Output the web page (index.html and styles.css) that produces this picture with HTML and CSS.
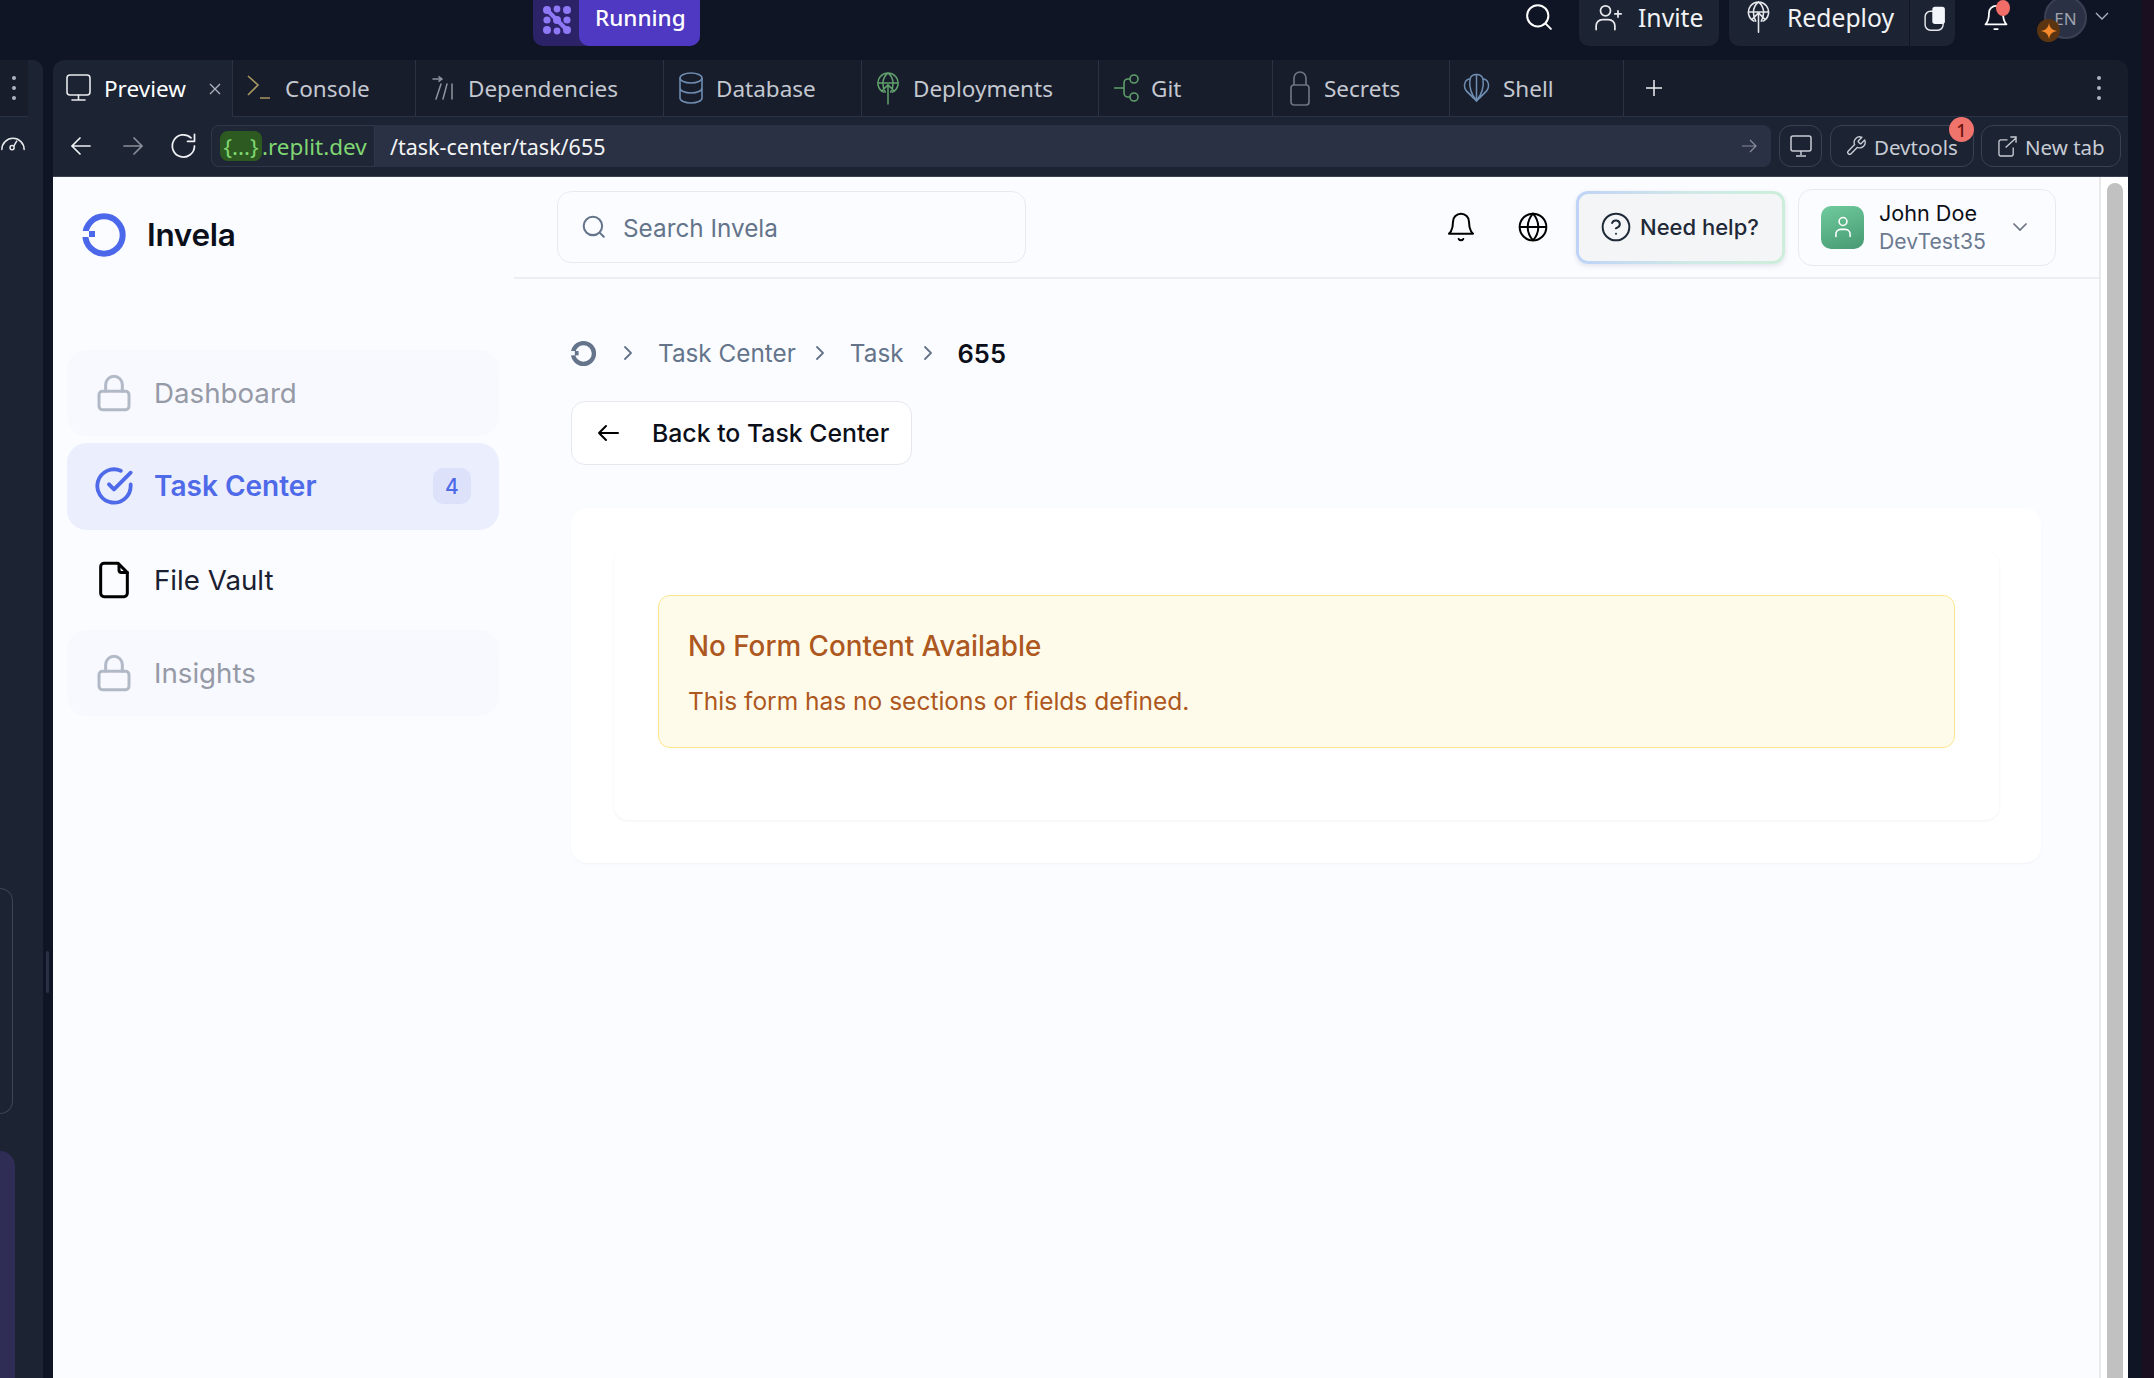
FILE: index.html
```html
<!DOCTYPE html>
<html lang="en">
<head>
<meta charset="utf-8">
<title>Invela</title>
<link rel="stylesheet" href="styles.css">
</head>
<body>
<div class="screen">
  <div class="desk">
    <header class="topbar">
      <div class="run">
        <span class="run-icon">
          <svg width="30" height="30" viewBox="0 0 30 30" fill="#8f78f5"><circle cx="5" cy="5" r="4"/><circle cx="15" cy="4" r="3.4"/><circle cx="25" cy="5" r="4"/><circle cx="5" cy="15" r="3.6"/><circle cx="15" cy="15" r="4"/><circle cx="25" cy="15" r="3.6"/><circle cx="5" cy="25" r="4"/><circle cx="15" cy="26" r="3.4"/><circle cx="25" cy="25" r="4"/><path d="M5 5 25 25" stroke="#8f78f5" stroke-width="4"/></svg>
        </span>
        <span class="run-label">Running</span>
      </div>
      <div class="top-right">
        <svg class="top-search" width="30" height="30" viewBox="0 0 24 24" fill="none" stroke="#fff" stroke-width="1.6" stroke-linecap="round"><circle cx="11" cy="11" r="8.5"/><path d="m17.5 17.5 4 4"/></svg>
        <div class="top-btn invite">
          <svg width="30" height="30" viewBox="0 0 24 24" fill="none" stroke="#e6e8ec" stroke-width="1.4" stroke-linecap="round"><circle cx="10" cy="7" r="4"/><path d="M2.5 22v-3a5 5 0 0 1 5-5h5a5 5 0 0 1 5 5v3M20 7v5M17.5 9.500h5"/></svg>
          <span>Invite</span>
        </div>
        <div class="top-btn redeploy">
          <span class="redeploy-main">
            <svg width="23" height="33" viewBox="0 0 24 36" fill="none" stroke="#e6e8ec" stroke-width="1.7" stroke-linecap="round" stroke-linejoin="round"><path d="M7 22A11 11 0 1 1 17 22M1 12h22M12 1c-8 7-6 15-3 21M12 1c8 7 6 15 3 21M12 14v20M5 20l7-7 7 7"/></svg>
            <span>Redeploy</span>
          </span>
          <span class="redeploy-copy">
            <svg width="24" height="27" viewBox="0 0 26 30" fill="none" stroke="#e6e8ec" stroke-width="1.6"><rect x="2" y="7" width="20" height="21" rx="6"/><rect x="10" y="2" width="14" height="19" rx="3" fill="#f3f6fb" stroke="none"/></svg>
          </span>
        </div>
        <div class="top-bell">
          <svg width="28" height="32" viewBox="0 0 24 27" fill="none" stroke="#fff" stroke-width="1.5" stroke-linecap="round" stroke-linejoin="round"><path d="M6 9a6 6 0 0 1 12 0c0 7 3 10 3 10H3s3-3 3-10M10.500 23h3"/></svg>
          <i class="red-dot"></i>
        </div>
        <div class="lang">
          <span>EN</span>
          <i class="star">
            <svg width="16" height="16" viewBox="0 0 16 16" fill="#f5892b"><path d="M8 0c.7 4.500 2.800 6.800 8 8-5.200 1.200-7.300 3.500-8 8-.7-4.500-2.800-6.800-8-8 5.200-1.200 7.300-3.500 8-8z"/></svg>
          </i>
        </div>
        <svg class="lang-chev" width="16" height="10" viewBox="0 0 16 10" fill="none" stroke="#aab0bc" stroke-width="1.4"><path d="m2 2 6 6 6-6"/></svg>
      </div>
    </header>

    <div class="workspace">
      <aside class="rail">
        <div class="rail-dots"><i></i><i></i><i></i></div>
        <div class="rail-gauge">
          <svg width="26" height="20" viewBox="0 0 28 20" fill="none" stroke="#e6e8ec" stroke-width="1.6" stroke-linecap="round"><path d="M2 17a12 12 0 1 1 24 0"/><circle cx="13" cy="15" r="2.200"/><path d="m15 13 3-5"/></svg>
        </div>
        <div class="rail-box"></div>
        <div class="rail-purple"></div>
      </aside>
      <div class="splitter"><i></i></div>

      <main class="panel">
        <nav class="tabs">
          <div class="tab active t-preview">
            <svg width="25" height="30" viewBox="0 0 25 30" fill="none" stroke="#e8eaee" stroke-width="1.600" stroke-linecap="round"><rect x="1" y="2" width="23" height="20" rx="3"/><path d="M12.500 22v5M6 27h13"/></svg>
            <span>Preview</span>
            <svg class="tab-x" width="14" height="14" viewBox="0 0 14 14" stroke="#aeb3bd" stroke-width="1.300"><path d="m2 2 10 10M12 2 2 12"/></svg>
          </div>
          <div class="tab t-console">
            <svg width="24" height="30" viewBox="0 0 24 30" fill="none" stroke-width="1.600"><path d="m1 3 10 9-10 10" stroke="#a8975f"/><path d="M13 25h10" stroke="#a8975f"/></svg>
            <span>Console</span>
          </div>
          <div class="tab t-deps">
            <svg width="22" height="24" viewBox="0 0 22 24" fill="none" stroke="#8f949e" stroke-width="1.500" stroke-linecap="round"><path d="M1 3h9M7 .8 10 3 7 5.200M9 8 4 23M15 8l-4 15M20 8v15"/></svg>
            <span>Dependencies</span>
          </div>
          <div class="tab t-db">
            <svg width="24" height="32" viewBox="0 0 24 32" fill="none" stroke="#6f8db0" stroke-width="1.600"><ellipse cx="12" cy="6" rx="11" ry="5"/><path d="M1 6v20c0 2.800 4.900 5 11 5s11-2.200 11-5V6M1 16c0 2.800 4.900 5 11 5s11-2.200 11-5"/></svg>
            <span>Database</span>
          </div>
          <div class="tab t-deploy">
            <svg width="22" height="33" viewBox="0 0 24 36" fill="none" stroke="#5f9e6a" stroke-width="1.700" stroke-linecap="round" stroke-linejoin="round"><path d="M7 22A11 11 0 1 1 17 22M1 12h22M12 1c-8 7-6 15-3 21M12 1c8 7 6 15 3 21M12 14v21M5 21l7-7 7 7"/></svg>
            <span>Deployments</span>
          </div>
          <div class="tab t-git">
            <svg width="26" height="30" viewBox="0 0 26 30" fill="none" stroke="#5f9e6a" stroke-width="1.600"><circle cx="21" cy="6" r="4"/><circle cx="21" cy="24" r="4"/><path d="M17 6h-2a4 4 0 0 0-4 4v10a4 4 0 0 0 4 4h2M1 15h10"/></svg>
            <span>Git</span>
          </div>
          <div class="tab t-secrets">
            <svg width="20" height="36" viewBox="0 0 20 36" fill="none" stroke="#6e7380" stroke-width="1.700"><rect x="1" y="15" width="18" height="20" rx="3"/><path d="M4 15V8a6 6 0 0 1 12 0v7"/></svg>
            <span>Secrets</span>
          </div>
          <div class="tab t-shell">
            <svg width="27" height="30" viewBox="0 0 27 30" fill="none" stroke="#6f8db0" stroke-width="1.500" stroke-linejoin="round" stroke-linecap="round"><path d="M13.500 28 10.500 25 3.500 18C-.5 13 2 6 7 6 8 2.500 11 1.500 13.500 1.500S19 2.500 20 6c5 0 7.500 7 3.500 12l-7 7z"/><path d="M13.500 1.500V28M7 6c-1 7 1 15 6.500 22M20 6c1 7-1 15-6.500 22M3.500 18l7 7M23.500 18l-7 7"/></svg>
            <span>Shell</span>
          </div>
          <div class="tab-plus">
            <svg width="16" height="16" viewBox="0 0 16 16" stroke="#f0f1f3" stroke-width="1.500"><path d="M8 0v16M0 8h16"/></svg>
          </div>
          <div class="tab-dots"><i></i><i></i><i></i></div>
        </nav>

        <div class="address">
          <svg class="nav-ic first" width="24" height="24" viewBox="0 0 24 24" fill="none" stroke="#eef0f3" stroke-width="1.700" stroke-linecap="round"><path d="M21 12H3M11 4l-8 8 8 8"/></svg>
          <svg class="nav-ic second" width="24" height="24" viewBox="0 0 24 24" fill="none" stroke="#8a8f9a" stroke-width="1.700" stroke-linecap="round"><path d="M3 12h18M13 4l8 8-8 8"/></svg>
          <svg class="nav-ic third" width="28" height="28" viewBox="0 0 24 24" fill="none" stroke="#eef0f3" stroke-width="1.500" stroke-linecap="round" stroke-linejoin="round"><path d="M21 12a9.500 9.500 0 1 1-3-7M21 2v6h-6"/></svg>
          <div class="url">
            <div class="domain"><span class="chip">{...}</span><span>.replit.dev</span></div>
            <span class="path">/task-center/task/655</span>
            <svg class="go" width="16" height="16" viewBox="0 0 16 16" fill="none" stroke="#888e9b" stroke-width="1.200"><path d="M1 8h14M9 2l6 6-6 6"/></svg>
          </div>
          <div class="addr-btn monitor">
            <svg width="22" height="24" viewBox="0 0 22 24" fill="none" stroke="#c8ccd4" stroke-width="1.500"><rect x="1" y="2" width="20" height="15" rx="2"/><path d="M11 17v4M6 22h10"/></svg>
          </div>
          <div class="addr-btn devtools">
            <svg width="22" height="24" viewBox="0 0 24 24" fill="none" stroke="#c8ccd4" stroke-width="1.500" stroke-linecap="round" stroke-linejoin="round"><path d="M14.700 6.300a1 1 0 0 0 0 1.400l1.600 1.600a1 1 0 0 0 1.400 0l3.770-3.770a6 6 0 0 1-7.940 7.940l-6.910 6.910a2.120 2.120 0 0 1-3-3l6.910-6.910a6 6 0 0 1 7.940-7.940z"/></svg>
            <span>Devtools</span>
            <b class="count">1</b>
          </div>
          <div class="addr-btn newtab">
            <svg width="19" height="21" viewBox="0 0 20 22" fill="none" stroke="#c8ccd4" stroke-width="1.400"><path d="M10 4H3a2 2 0 0 0-2 2v13a2 2 0 0 0 2 2h11a2 2 0 0 0 2-2v-7M8 12 19 2M13 1h6v6"/></svg>
            <span>New tab</span>
          </div>
        </div>

        <div class="app">
          <div class="page">
            <aside class="sidebar">
              <div class="brand">
                <svg width="44" height="44" viewBox="0 0 44 44"><circle cx="22" cy="22" r="18.700" fill="none" stroke="#4c68ea" stroke-width="6"/><rect x="0" y="18" width="7" height="6" fill="#fbfcff"/><rect x="7" y="18" width="6" height="6" fill="#4c68ea"/></svg>
                <span>Invela</span>
              </div>
              <ul class="nav">
                <li class="nav-item locked">
                  <svg width="40" height="40" viewBox="0 0 24 24" fill="none" stroke="#b2b9c6" stroke-width="1.800" stroke-linecap="round" stroke-linejoin="round"><rect x="3" y="11" width="18" height="11" rx="2"/><path d="M7 11V7a5 5 0 0 1 10 0v4"/></svg>
                  <span>Dashboard</span>
                </li>
                <li class="nav-item current">
                  <svg width="40" height="40" viewBox="0 0 24 24" fill="none" stroke="#4f6ae8" stroke-width="2.300" stroke-linecap="round" stroke-linejoin="round"><path d="M22 11.080V12a10 10 0 1 1-5.930-9.140"/><path d="m22 4-10 10.010-3-3"/></svg>
                  <span>Task Center</span>
                  <em class="badge">4</em>
                </li>
                <li class="nav-item">
                  <svg width="40" height="40" viewBox="0 0 24 24" fill="none" stroke="#000" stroke-width="1.800" stroke-linecap="round" stroke-linejoin="round"><path d="M14.500 2H6a2 2 0 0 0-2 2v16a2 2 0 0 0 2 2h12a2 2 0 0 0 2-2V7.500z"/><path d="M15 3v3a1.500 1.500 0 0 0 1.500 1.500H20"/></svg>
                  <span>File Vault</span>
                </li>
                <li class="nav-item locked">
                  <svg width="40" height="40" viewBox="0 0 24 24" fill="none" stroke="#b2b9c6" stroke-width="1.800" stroke-linecap="round" stroke-linejoin="round"><rect x="3" y="11" width="18" height="11" rx="2"/><path d="M7 11V7a5 5 0 0 1 10 0v4"/></svg>
                  <span>Insights</span>
                </li>
              </ul>
            </aside>

            <div class="main">
              <div class="header">
                <div class="search">
                  <svg width="26" height="26" viewBox="0 0 24 24" fill="none" stroke="#64748b" stroke-width="1.900" stroke-linecap="round"><circle cx="11" cy="11" r="8.500"/><path d="m21 21-3.800-3.800"/></svg>
                  <span>Search Invela</span>
                </div>
                <div class="icon-btn bell">
                  <svg width="32" height="32" viewBox="0 0 24 24" fill="none" stroke="#000" stroke-width="1.500" stroke-linecap="round" stroke-linejoin="round"><path d="M6 8a6 6 0 0 1 12 0c0 7 3 9 3 9H3s3-2 3-9"/><path d="M10.300 21a1.940 1.940 0 0 0 3.400 0"/></svg>
                </div>
                <div class="icon-btn globe">
                  <svg width="32" height="32" viewBox="0 0 24 24" fill="none" stroke="#000" stroke-width="1.500"><circle cx="12" cy="12" r="10"/><path d="M2 12h20M12 2a15.300 15.300 0 0 1 4 10 15.300 15.300 0 0 1-4 10 15.300 15.300 0 0 1-4-10 15.300 15.300 0 0 1 4-10z"/></svg>
                </div>
                <div class="help">
                  <div class="help-in">
                    <svg width="32" height="32" viewBox="0 0 24 24" fill="none" stroke="#1f2937" stroke-width="1.500" stroke-linecap="round"><circle cx="12" cy="12" r="10"/><path d="M9.100 9a3 3 0 0 1 5.800 1c0 2-3 3-3 3M12 17h.01"/></svg>
                    <span>Need help?</span>
                  </div>
                </div>
                <div class="user">
                  <span class="avatar">
                    <svg width="28" height="30" viewBox="0 0 28 30" fill="none" stroke="#fff" stroke-width="2" stroke-linecap="round"><circle cx="14" cy="8" r="5"/><path d="M5 27v-3a6 6 0 0 1 6-6h6a6 6 0 0 1 6 6v3"/></svg>
                  </span>
                  <span class="who"><b>John Doe</b><small>DevTest35</small></span>
                  <svg class="user-chev" width="16" height="10" viewBox="0 0 16 10" fill="none" stroke="#6b7280" stroke-width="1.700" stroke-linecap="round"><path d="m2 2 6 6 6-6"/></svg>
                </div>
              </div>

              <div class="content">
                <div class="crumbs">
                  <svg class="crumb-home" width="27" height="27" viewBox="0 0 44 44"><circle cx="22" cy="22" r="17" fill="none" stroke="#64748b" stroke-width="7"/><rect x="0" y="18" width="8" height="7" fill="#fbfcff"/><rect x="8" y="18" width="6" height="7" fill="#64748b"/></svg>
                  <svg class="chev" width="12" height="16" viewBox="0 0 12 16" fill="none" stroke="#64748b" stroke-width="1.800" stroke-linecap="round" stroke-linejoin="round"><path d="m3 2 6 6-6 6"/></svg>
                  <span>Task Center</span>
                  <svg class="chev" width="12" height="16" viewBox="0 0 12 16" fill="none" stroke="#64748b" stroke-width="1.800" stroke-linecap="round" stroke-linejoin="round"><path d="m3 2 6 6-6 6"/></svg>
                  <span>Task</span>
                  <svg class="chev" width="12" height="16" viewBox="0 0 12 16" fill="none" stroke="#64748b" stroke-width="1.800" stroke-linecap="round" stroke-linejoin="round"><path d="m3 2 6 6-6 6"/></svg>
                  <strong>655</strong>
                </div>
                <div class="back">
                  <svg width="24" height="24" viewBox="0 0 24 24" fill="none" stroke="#000" stroke-width="2" stroke-linecap="round" stroke-linejoin="round"><path d="M22 12H3M10 5l-7 7 7 7"/></svg>
                  <span>Back to Task Center</span>
                </div>
                <section class="card">
                  <div class="inner">
                    <div class="alert">
                      <h2>No Form Content Available</h2>
                      <p>This form has no sections or fields defined.</p>
                    </div>
                  </div>
                </section>
              </div>
            </div>
          </div>
          <div class="scroll"><i></i></div>
        </div>
      </main>
    </div>
  </div>
  <div class="edge"></div>
</div>
</body>
</html>
```
FILE: styles.css
```css
* { box-sizing: border-box; }
html, body { margin: 0; height: 100%; }
body { overflow: hidden; background: #0f1524; font-family: "Noto Sans", sans-serif; }
svg { display: block; flex: none; }
i, em { font-style: normal; display: block; }
ul { list-style: none; margin: 0; padding: 0; }

.screen { display: flex; width: 2154px; height: 1378px; }
.desk { width: 2142px; display: flex; flex-direction: column; }
.edge { width: 12px; background: #1a0f20; }

/* top bar */
.topbar { height: 60px; display: flex; align-items: flex-start; flex: none; }
.run { margin-left: 533px; height: 46px; width: 167px; display: flex; background: #2b2268; border-radius: 0 0 10px 10px; }
.run-icon { width: 46px; display: flex; align-items: center; justify-content: center; padding: 0 0 6px 2px; }
.run-label { flex: 1; background: #4f38c2; border-radius: 0 0 10px 10px; color: #fff; font-size: 22.5px; font-weight: 500; padding-left: 16px; line-height: 36px; }
.top-right { margin-left: auto; display: flex; align-items: flex-start; height: 46px; padding-right: 32px; }
.top-search { margin-top: 2px; margin-right: 25px; }
.top-btn { height: 46px; background: #1c2333; border-radius: 0 0 10px 10px; display: flex; align-items: center; color: #f2f3f5; font-size: 24.7px; }
.invite { width: 140px; padding: 0 0 12px 14px; gap: 15px; margin-right: 10px; }
.redeploy { width: 226px; }
.redeploy-main { width: 181px; height: 46px; display: flex; align-items: center; gap: 17px; padding: 0 0 11px 18px; border-right: 1px solid #10151f; }
.redeploy-copy { flex: 1; display: flex; justify-content: center; padding: 0 0 10px 5px; }
.top-bell { position: relative; margin: 2px 0 0 27px; }
.red-dot { position: absolute; left: 14px; top: -2px; width: 14px; height: 16px; background: #f26d67; border-radius: 50%; }
.lang { position: relative; width: 43px; height: 43px; margin: -4px 0 0 34px; border-radius: 50%; background: #2b3144; border: 2px solid #3a4154; color: #9ea3ae; font-size: 17px; display: flex; align-items: center; justify-content: center; padding-top: 2px; }
.star { position: absolute; left: -9px; top: 21px; width: 23px; height: 23px; border-radius: 50%; background: #5b3511; display: flex; align-items: center; justify-content: center; }
.lang-chev { margin: 11px 0 0 7px; }

/* workspace */
.workspace { flex: 1; display: flex; min-height: 0; }
.rail { width: 43px; background: #1c2333; border-radius: 0 10px 0 0; display: flex; flex-direction: column; overflow: hidden; }
.rail-dots { height: 57px; flex: none; background: #181d2c; border-bottom: 1px solid #2b3244; display: flex; flex-direction: column; align-items: center; justify-content: center; gap: 6px; width: 28px; }
.rail-dots i, .tab-dots i { width: 4px; height: 4px; border-radius: 50%; background: #aeb3bd; }
.rail-gauge { margin-top: 16px; height: 20px; flex: none; }
.rail-box { margin-top: 735px; width: 13px; height: 226px; flex: none; border: 1px solid #3d4558; border-left: 0; border-radius: 0 14px 14px 0; }
.rail-purple { margin-top: 37px; width: 15px; flex: 1; background: #2f2d55; border-radius: 0 16px 0 0; }
.splitter { width: 10px; padding: 891px 4px 0 3px; }
.splitter i { width: 3px; height: 42px; background: #2b3144; border-radius: 2px; }
.panel { width: 2075px; display: flex; flex-direction: column; background: #1c2333; border-radius: 12px 12px 0 0; overflow: hidden; }

/* tabs */
.tabs { height: 57px; flex: none; display: flex; background: #181d2c; color: #c4c8d0; font-size: 22.5px; }
.tab { display: flex; align-items: center; gap: 14px; padding-left: 14px; border-right: 1px solid #2b3244; border-bottom: 1px solid #2b3244; }
.tab.active { background: #1c2333; color: #fff; border-bottom-color: transparent; padding-left: 13px; position: relative; gap: 13px; }
.tab-x { position: absolute; left: 155px; top: 22px; }
.t-preview { width: 180px; }
.t-console { width: 183px; }
.t-deps { width: 248px; padding-left: 16px; gap: 14px; }
.t-db { width: 198px; padding-left: 15px; gap: 13px; }
.t-deploy { width: 237px; padding-left: 15px; gap: 14px; }
.t-git { width: 174px; gap: 12px; }
.t-secrets { width: 177px; padding-left: 17px; }
.t-shell { width: 174px; padding-left: 13px; gap: 13px; }
.tab-plus { width: 58px; border-bottom: 1px solid #2b3244; display: flex; align-items: center; padding-left: 22px; }
.tab-dots { flex: 1; border-bottom: 1px solid #2b3244; display: flex; flex-direction: column; align-items: flex-end; justify-content: center; gap: 6px; padding-right: 27px; }

/* address row */
.address { height: 60px; flex: none; display: flex; align-items: center; padding-bottom: 1px; border-bottom: 1px solid #3a4050; color: #c8ccd4; font-size: 20.5px; }
.nav-ic.first { margin-left: 16px; }
.nav-ic.second { margin-left: 28px; }
.nav-ic.third { margin-left: 25px; margin-right: 13px; }
.url { width: 1560px; height: 42px; display: flex; align-items: center; background: #2b3144; border-radius: 8px; color: #fff; }
.domain { width: 164px; height: 42px; flex: none; display: flex; align-items: center; background: #1f2636; border: 1px solid #2f3649; border-radius: 8px 0 0 8px; padding-left: 8px; color: #7fd672; font-size: 22.5px; }
.chip { background: #2d5a20; border-radius: 8px; height: 30px; width: 42px; display: flex; align-items: center; justify-content: center; }
.path { margin-left: 15px; font-size: 21.5px; color: #f4f5f7; }
.go { margin-left: auto; margin-right: 14px; }
.addr-btn { height: 42px; margin-left: 8px; border: 1px solid #3a4154; border-radius: 12px; display: flex; align-items: center; position: relative; }
.addr-btn span { padding-top: 2px; }
.monitor { width: 43px; justify-content: center; }
.devtools { width: 144px; padding-left: 14px; gap: 7px; }
.newtab { width: 140px; margin-left: 7px; padding-left: 16px; gap: 8px; }
.count { position: absolute; left: 118px; top: -9px; width: 25px; height: 25px; border-radius: 50%; background: #f0736c; color: #6b1410; font-size: 18px; font-weight: 500; display: flex; align-items: center; justify-content: center; }

/* app */
.app { flex: 1; display: flex; min-height: 0; background: #fbfcff; font-family: Inter, sans-serif; }
.page { flex: 1; display: flex; }
.scroll { width: 29px; background: #fff; border-left: 2px solid #e9e9e9; padding: 6px 5px 0 6px; }
.scroll i { height: 100%; background: #c1c1c1; border-radius: 8px 8px 0 0; }

.sidebar { width: 461px; flex: none; padding: 35.5px 15px 0 14px; }
.brand { display: flex; align-items: center; gap: 21px; padding-left: 15px; height: 44px; font-size: 31.5px; font-weight: 600; color: #0b0f1a; margin-bottom: 93.5px; letter-spacing: -.3px; }
.nav { display: flex; flex-direction: column; gap: 7.2px; }
.nav-item { height: 86.2px; border-radius: 20px; display: flex; align-items: center; padding: 0 27px; gap: 20px; font-size: 27.7px; color: #1a2030; }
.nav-item.locked { background: #f8f9fe; color: #959aa6; }
.nav-item.current { background: #ebeefd; color: #4f6ae8; font-weight: 600; font-size: 28px; }
.badge { margin-left: auto; margin-right: 1px; width: 38px; height: 36px; border-radius: 10px; background: #dde2fa; font-size: 21px; font-weight: 500; display: flex; align-items: center; justify-content: center; }

.main { flex: 1; min-width: 0; }
.header { height: 102px; display: flex; align-items: center; padding: 0 43px; border-bottom: 2px solid #eceef3; }
.search { width: 469px; height: 72px; display: flex; align-items: center; gap: 16px; padding-left: 23px; border: 1.5px solid #e8eaf0; border-radius: 14px; color: #64748b; font-size: 24.3px; margin-right: auto; }
.search span { padding-top: 1px; }
.icon-btn { width: 44px; height: 44px; display: flex; align-items: center; justify-content: center; }
.bell { margin-right: 28px; }
.globe { margin-right: 21px; }
.help { width: 209px; height: 73px; padding: 3px; border-radius: 12px; background: linear-gradient(90deg, #bfd3f7, #cfe9e6 55%, #cdeedb); box-shadow: 0 2px 5px rgba(30, 50, 90, .12); margin-right: 13px; }
.help-in { height: 100%; background: #f4f5f7; border-radius: 9px; display: flex; align-items: center; gap: 8px; padding-left: 21px; color: #1f2937; font-size: 22px; font-weight: 500; }
.user { width: 258px; height: 77px; flex: none; border: 1.5px solid #e8eaf0; border-radius: 14px; display: flex; align-items: center; padding-left: 22px; gap: 15px; }
.avatar { width: 43px; height: 43px; border-radius: 10px; background: linear-gradient(160deg, #6fcb9c, #479973); display: flex; align-items: center; justify-content: center; padding: 2px; }
.avatar svg { width: 22px; height: 24px; }
.who { display: flex; flex-direction: column; gap: 2px; width: 106px; }
.who b { font-weight: 400; font-size: 21.6px; line-height: 26px; color: #0b0f1a; }
.who small { font-size: 21.2px; line-height: 26px; color: #6b7a90; }
.user-chev { margin-left: 12px; }

.content { padding: 59px 58px 0 57px; }
.crumbs { height: 30px; display: flex; align-items: center; color: #64748b; font-size: 24.3px; }
.crumb-home { margin-right: 25px; margin-left: -1px; }
.crumbs .chev { margin-right: 24px; }
.crumbs span { margin-right: 18px; }
.crumbs strong { color: #0b0f1a; font-weight: 600; font-size: 25.5px; }
.back { width: 341px; height: 64px; margin-top: 32.5px; background: #fff; border: 1.5px solid #e6e8ee; border-radius: 14px; display: flex; align-items: center; gap: 32px; padding-left: 24px; font-size: 24.8px; font-weight: 500; color: #0b0f1a; }
.back span { padding-top: 1px; }
.card { margin-top: 43.5px; height: 355px; background: #fff; border-radius: 16px; box-shadow: 0 1px 2px rgba(20, 30, 60, .04); padding: 43px 42px 0 43px; }
.inner { height: 269px; background: #fff; border-radius: 14px; box-shadow: 0 1px 3px rgba(20, 30, 60, .06); padding: 44px 44px 0 44px; }
.alert { height: 153px; background: #fffbeb; border: 1.5px solid #fde68a; border-radius: 12px; padding: 0 29px; color: #ad5820; }
.alert h2 { margin: 32px 0 0; font-size: 27.8px; line-height: 36px; font-weight: 500; }
.alert p { margin: 19px 0 0; font-size: 24.5px; line-height: 36px; }
```
